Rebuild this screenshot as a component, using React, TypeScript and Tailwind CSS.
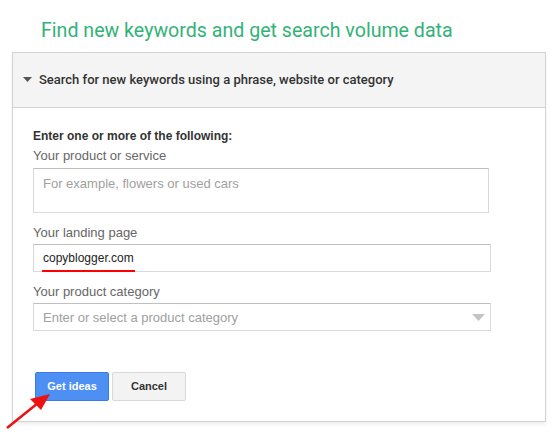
export default function App() {
  const arial = { fontFamily: '"Liberation Sans", Arial, sans-serif' }
  return (
    <div className="relative w-[557px] h-[435px] bg-white overflow-hidden" style={arial}>
      <h1
        className="pl-[41px] pt-[19px] text-[19.6px] leading-[24px] text-[#33b278]"
        style={{ fontFamily: 'Roboto, sans-serif' }}
      >
        Find new keywords and get search volume data
      </h1>

      <div className="ml-[12px] mt-[9px] w-[534px] border border-[#d3d3d3] shadow-[0_3px_3px_rgba(0,0,0,0.06)]">
        {/* header */}
        <div className="h-[55px] bg-[#f4f4f4] border-b border-[#d3d3d3] flex items-center pl-[10px]">
          <svg width="9" height="5" viewBox="0 0 9 5" className="mr-[7px] mt-[-1px]">
            <path d="M0 0h9L4.5 5z" fill="#555" />
          </svg>
          <span
            className="text-[13px] font-medium text-[#333]"
            style={{ fontFamily: 'Roboto, sans-serif' }}
          >
            Search for new keywords using a phrase, website or category
          </span>
        </div>

        {/* body */}
        <div className="pl-[20px] pt-[19px] pb-[20px] text-[13px] leading-[19px]">
          <div className="font-bold text-[12px] text-[#333]">Enter one or more of the following:</div>
          <div className="text-[#666]">Your product or service</div>
          <div className="mt-[3px] w-[456px] h-[45px] border border-[#d9d9d9] border-t-[#c0c0c0] pl-[9px] pt-[5px] text-[#a0a0a0]">
            For example, flowers or used cars
          </div>

          <div className="mt-[10px] text-[#666]">Your landing page</div>
          <div className="mt-[2px] w-[458px] h-[28px] border border-[#d9d9d9] border-t-[#c0c0c0] pl-[9px] flex items-center text-[12px] text-[#222]">
            <span className="relative">
              copyblogger.com
              <span className="absolute left-[-1px] right-[-1px] bottom-[-4px] h-[2px] bg-[#ff0000]" />
            </span>
          </div>

          <div className="mt-[10px] text-[#666]">Your product category</div>
          <div className="mt-[2px] w-[458px] h-[28px] border border-[#d9d9d9] border-t-[#c0c0c0] pl-[9px] pr-[5px] flex items-center justify-between text-[#a0a0a0]">
            <span>Enter or select a product category</span>
            <svg width="13" height="7" viewBox="0 0 13 7">
              <path d="M0 0h13L6.5 7z" fill="#c4c4c4" />
            </svg>
          </div>

          <div className="mt-[41px] ml-[2px] flex gap-[3px]">
            <button className="w-[74px] h-[29px] rounded-[2px] bg-[#4d8ff2] border border-[#3b7be8] text-white text-[11px] font-bold">
              Get ideas
            </button>
            <button className="w-[74px] h-[29px] rounded-[2px] bg-[#f3f3f3] border border-[#d8d8d8] text-[#333] text-[11px] font-bold">
              Cancel
            </button>
          </div>
        </div>
      </div>

      {/* red arrow */}
      <svg className="absolute left-0 top-[385px]" width="60" height="50" viewBox="0 0 60 50">
        <line x1="7" y1="43" x2="38" y2="18" stroke="#ee1111" strokeWidth="2.5" />
        <path d="M50 9L30 14L41 25z" fill="#ee1111" />
      </svg>
    </div>
  )
}
